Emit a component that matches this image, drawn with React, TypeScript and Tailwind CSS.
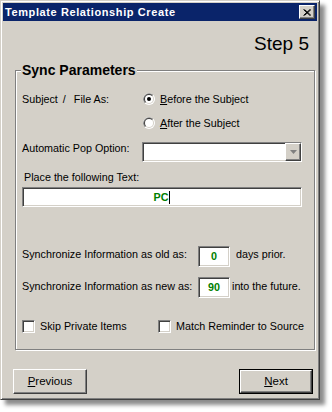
import React from "react";

const sunken =
  "border border-t-[#808080] border-l-[#808080] border-b-white border-r-white shadow-[inset_1px_1px_0_#404040,inset_-1px_-1px_0_#d4d0c8] bg-white";
const raised =
  "border border-t-white border-l-white border-b-[#404040] border-r-[#404040] shadow-[inset_-1px_-1px_0_#808080] bg-[#d4d0c8]";

const Radio = ({ checked }: { checked?: boolean }) => (
  <svg width="12" height="12" viewBox="0 0 12 12" className="shrink-0">
    <circle cx="6" cy="6" r="6" fill="#ffffff" />
    <path d="M1.76 10.24 A6 6 0 0 1 10.24 1.76 Z" fill="#808080" />
    <circle cx="6" cy="6" r="5" fill="#d4d0c8" />
    <path d="M2.46 9.54 A5 5 0 0 1 9.54 2.46 Z" fill="#404040" />
    <circle cx="6" cy="6" r="4" fill="#ffffff" />
    {checked && <circle cx="6" cy="6" r="2" fill="#000000" />}
  </svg>
);

const Checkbox = () => <div className={`w-[13px] h-[13px] shrink-0 ${sunken}`} />;

const Button = ({ first, rest, isDefault }: { first: string; rest: string; isDefault?: boolean }) => (
  <div className={`w-[74px] h-[25px] ${isDefault ? "border border-black" : ""}`}>
    <div className={`w-full h-full flex items-center justify-center ${raised}`}>
      <span className="text-[11.5px]">
        <span className="underline underline-offset-1">{first}</span>
        {rest}
      </span>
    </div>
  </div>
);

export default function App() {
  return (
    <div className="w-[332px] h-[412px] bg-white font-['Liberation_Sans',Arial,sans-serif] text-[10.75px] leading-[13px] text-black">
      <div className="w-[320px] h-[400px] flex flex-col bg-[#d4d0c8] border border-t-[#d4d0c8] border-l-[#d4d0c8] border-b-[#404040] border-r-[#404040] p-[2px] shadow-[inset_1px_1px_0_#fff,inset_-1px_-1px_0_#808080,5px_5px_4px_rgba(0,0,0,0.45)]">
        {/* title bar */}
        <div className="h-[18px] bg-[#0a246a] flex items-center justify-between pl-[2px] pr-[2px]">
          <span className="text-white font-bold text-[11px] tracking-[0.6px]">Template Relationship Create</span>
          <div className={`w-[16px] h-[14px] flex items-center justify-center ${raised}`}>
            <svg width="8" height="7" viewBox="0 0 8 7">
              <path d="M0.5 0.5 L7 6.5 M1.5 0.5 L8 6.5 M7 0.5 L0.5 6.5 M8 0.5 L1.5 6.5" stroke="#000" strokeWidth="1" />
            </svg>
          </div>
        </div>

        <div className="mt-[12px] pr-[8px] text-right text-[19px] leading-[22px]">Step 5</div>

        <fieldset className="ml-[12px] mr-[2px] mt-[7px] h-[288px] border border-[#808080] px-[6px] shadow-[inset_1px_1px_0_#fff,1px_1px_0_#fff]">
          <legend className="-ml-px px-px bg-[#d4d0c8] font-bold text-[14px] leading-[16px]">Sync Parameters</legend>

          <div className="mt-[13px] h-[16px] flex items-center">
            <div className="w-[121px] flex">
              <span>Subject</span>
              <span className="ml-[5px]">/</span>
              <span className="ml-[8px]">File As:</span>
            </div>
            <Radio checked />
            <span className="ml-[5px]">
              <span className="underline">B</span>efore the Subject
            </span>
          </div>
          <div className="mt-[8px] h-[16px] flex items-center pl-[121px]">
            <Radio />
            <span className="ml-[5px]">
              <span className="underline">A</span>fter the Subject
            </span>
          </div>

          <div className="mt-[11px] h-[20px] flex items-start">
            <span className="w-[120px]">Automatic Pop Option:</span>
            <div className={`w-[160px] h-[20px] flex justify-end ${sunken}`}>
              <div className={`w-[16px] h-full flex items-center justify-center ${raised}`}>
                <svg width="7" height="4" viewBox="0 0 7 4">
                  <path d="M0 0 H7 L3.5 4 Z" fill="#808080" />
                </svg>
              </div>
            </div>
          </div>

          <div className="mt-[9px] pl-[2px]">Place the following Text:</div>
          <div className={`mt-[3px] w-[280px] h-[20px] flex items-center justify-center ${sunken}`}>
            <span className="font-bold text-[#008000]">PC</span>
            <span className="w-px h-[13px] bg-black ml-px" />
          </div>

          <div className="mt-[39px] h-[21px] flex items-start">
            <span className="w-[176px] pt-[2px]">Synchronize Information as old as:</span>
            <div className={`w-[32px] h-[21px] flex items-center justify-center font-bold text-[#008000] ${sunken}`}>0</div>
            <span className="ml-[6px] pt-[2px]">days prior.</span>
          </div>
          <div className="mt-[10px] h-[21px] flex items-start">
            <span className="w-[176px] pt-[3px]">Synchronize Information as new as:</span>
            <div className={`w-[32px] h-[21px] flex items-center justify-center font-bold text-[#008000] ${sunken}`}>90</div>
            <span className="ml-[2px] pt-[3px]">into the future.</span>
          </div>

          <div className="mt-[22px] flex items-start">
            <div className="w-[136px] flex items-start">
              <Checkbox />
              <span className="ml-[5px]">Skip Private Items</span>
            </div>
            <Checkbox />
            <span className="ml-[5px]">Match Reminder to Source</span>
          </div>
        </fieldset>

        <div className="mt-[19px] flex justify-between pl-[10px] pr-[4px]">
          <Button first="P" rest="revious" />
          <Button first="N" rest="ext" isDefault />
        </div>
      </div>
    </div>
  );
}
